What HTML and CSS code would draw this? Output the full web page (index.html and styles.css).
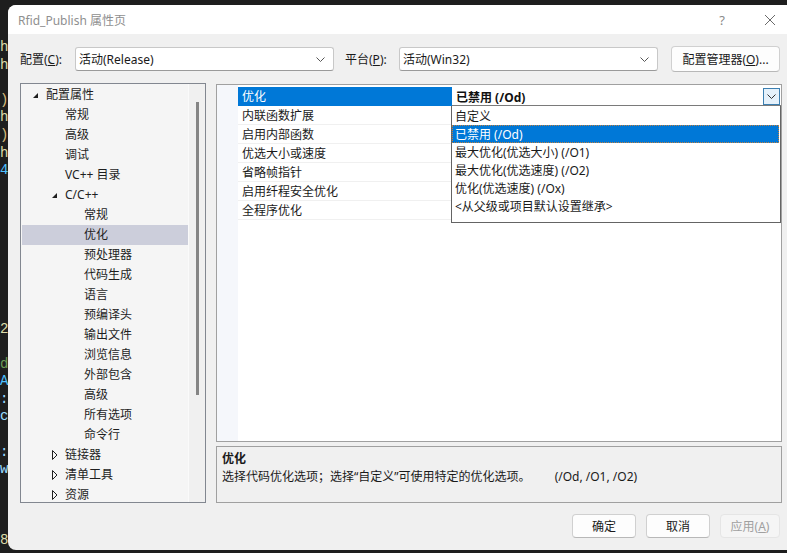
FILE: index.html
```html
<!DOCTYPE html>
<html lang="zh-CN">
<head>
<meta charset="utf-8">
<title>Rfid_Publish 属性页</title>
<link rel="stylesheet" href="styles.css">
</head>
<body>
<div class="desk">
  <div class="code">
    <div class="cl y">h</div>
    <div class="cl y">h</div>
    <div class="cl"></div>
    <div class="cl w">)</div>
    <div class="cl y">h</div>
    <div class="cl w">)</div>
    <div class="cl y">h</div>
    <div class="cl b">4</div>
    <div class="cl"></div><div class="cl"></div><div class="cl"></div><div class="cl"></div>
    <div class="cl"></div><div class="cl"></div><div class="cl"></div><div class="cl"></div>
    <div class="cl y">2</div>
    <div class="cl"></div>
    <div class="cl g">d</div>
    <div class="cl b">A</div>
    <div class="cl lb">:</div>
    <div class="cl lb">c</div>
    <div class="cl"></div>
    <div class="cl lb">:</div>
    <div class="cl lb">w</div>
    <div class="cl"></div><div class="cl"></div><div class="cl"></div>
    <div class="cl y">8</div>
  </div>
  <div class="win">
    <div class="titlebar">
      <span class="title">Rfid_Publish 属性页</span>
      <span class="help">?</span>
      <span class="close"><svg width="12" height="12" viewBox="0 0 12 12"><path d="M1 1 L11 11 M11 1 L1 11" stroke="#6a6a6a" stroke-width="1" fill="none"/></svg></span>
    </div>
    <div class="content">
      <div class="toprow">
        <span class="lbl lbl1">配置(<u>C</u>):</span>
        <div class="combo"><span>活动(Release)</span><svg class="chev" width="9" height="5" viewBox="0 0 9 5"><path d="M0.5 0.5 L4.5 4.5 L8.5 0.5" stroke="#555" fill="none"/></svg></div>
        <span class="lbl lbl2">平台(<u>P</u>):</span>
        <div class="combo"><span>活动(Win32)</span><svg class="chev" width="9" height="5" viewBox="0 0 9 5"><path d="M0.5 0.5 L4.5 4.5 L8.5 0.5" stroke="#555" fill="none"/></svg></div>
        <button class="btn mgr">配置管理器(<u>O</u>)...</button>
      </div>
      <div class="main">
        <div class="tree">
          <div class="tree-list">
            <div class="node l0"><span class="exp"></span>配置属性</div>
            <div class="node l1">常规</div>
            <div class="node l1">高级</div>
            <div class="node l1">调试</div>
            <div class="node l1">VC++ 目录</div>
            <div class="node l1t"><span class="exp"></span>C/C++</div>
            <div class="node l2">常规</div>
            <div class="node l2 sel">优化</div>
            <div class="node l2">预处理器</div>
            <div class="node l2">代码生成</div>
            <div class="node l2">语言</div>
            <div class="node l2">预编译头</div>
            <div class="node l2">输出文件</div>
            <div class="node l2">浏览信息</div>
            <div class="node l2">外部包含</div>
            <div class="node l2">高级</div>
            <div class="node l2">所有选项</div>
            <div class="node l2">命令行</div>
            <div class="node l1t"><svg class="col" width="6" height="10" viewBox="0 0 6 10"><path d="M0.5 0.5 L5 5 L0.5 9.5 Z" stroke="#1e1e1e" fill="none"/></svg>链接器</div>
            <div class="node l1t"><svg class="col" width="6" height="10" viewBox="0 0 6 10"><path d="M0.5 0.5 L5 5 L0.5 9.5 Z" stroke="#1e1e1e" fill="none"/></svg>清单工具</div>
            <div class="node l1t"><svg class="col" width="6" height="10" viewBox="0 0 6 10"><path d="M0.5 0.5 L5 5 L0.5 9.5 Z" stroke="#1e1e1e" fill="none"/></svg>资源</div>
          </div>
          <div class="scroll"><div class="thumb"></div></div>
        </div>
        <div class="rightcol">
          <div class="grid">
            <div class="gutter"></div>
            <div class="rows">
              <div class="prow first">
                <div class="pname selname">优化</div>
                <div class="pval edit"><b>已禁用 (/Od)</b><span class="ddbtn"><svg width="9" height="5" viewBox="0 0 9 5"><path d="M0.5 0.5 L4.5 4.5 L8.5 0.5" stroke="#333" fill="none"/></svg></span></div>
              </div>
              <div class="prow"><div class="pname">内联函数扩展</div><div class="pval"></div></div>
              <div class="prow"><div class="pname">启用内部函数</div><div class="pval"></div></div>
              <div class="prow"><div class="pname">优选大小或速度</div><div class="pval"></div></div>
              <div class="prow"><div class="pname">省略帧指针</div><div class="pval"></div></div>
              <div class="prow"><div class="pname">启用纤程安全优化</div><div class="pval"></div></div>
              <div class="prow"><div class="pname">全程序优化</div><div class="pval"></div></div>
            </div>
            <div class="dropdown">
              <div class="opt">自定义</div>
              <div class="opt cur">已禁用 (/Od)</div>
              <div class="opt">最大优化(优选大小) (/O1)</div>
              <div class="opt">最大优化(优选速度) (/O2)</div>
              <div class="opt">优化(优选速度) (/Ox)</div>
              <div class="opt">&lt;从父级或项目默认设置继承&gt;</div>
            </div>
          </div>
          <div class="desc">
            <div class="dtitle">优化</div>
            <div class="dtext">选择代码优化选项；选择“自定义”可使用特定的优化选项。<span class="dflags">(/Od, /O1, /O2)</span></div>
          </div>
        </div>
      </div>
      <div class="buttons">
        <button class="btn act">确定</button>
        <button class="btn act">取消</button>
        <button class="btn act dis">应用(<u>A</u>)</button>
      </div>
    </div>
  </div>
</div>
</body>
</html>
```

FILE: styles.css
```css
* { box-sizing: border-box; }
html, body { margin: 0; padding: 0; }
body {
  background: #1e1e1e;
  width: 787px;
  height: 553px;
  overflow: hidden;
  font-family: "Noto Sans", "Noto Sans CJK SC", sans-serif;
  font-size: 12px;
  color: #1a1a1a;
}
.desk { display: flex; height: 553px; }
.code {
  width: 8px;
  flex: none;
  overflow: hidden;
  padding-top: 39px;
  font-family: "Liberation Mono", monospace;
  font-size: 14px;
  line-height: 17.6px;
}
.cl { height: 17.6px; white-space: pre; }
.y { color: #dcdcaa; }
.w { color: #d7ba7d; }
.b { color: #4fc1ff; }
.lb { color: #9cdcfe; }
.g { color: #6a9955; }

.win {
  flex: 1;
  margin-top: 5px;
  height: 545px;
  border-radius: 8px 0 0 8px;
  background: #f0f0f0;
  overflow: hidden;
  display: flex;
  flex-direction: column;
}
.titlebar {
  height: 29px;
  background: #ffffff;
  display: flex;
  align-items: center;
  padding-left: 10px;
  flex: none;
}
.title { color: #8f8f8f; font-size: 12px; flex: 1; }
.help { color: #8a8a8a; font-size: 13px; width: 14px; text-align: center; margin-right: 35px; }
.close { display: flex; align-items: center; margin-right: 11px; }

.content { flex: 1; display: flex; flex-direction: column; padding-top: 12px; }
.toprow { display: flex; align-items: center; padding-left: 12px; height: 26px; }
.lbl { color: #1a1a1a; }
.lbl1 { width: 55px; }
.lbl2 { width: 54px; margin-left: 11px; }
.combo {
  width: 259px;
  height: 24px;
  background: #fff;
  border: 1px solid #c8c8c8;
  border-bottom-color: #9a9a9a;
  border-radius: 3px;
  display: flex;
  align-items: center;
  justify-content: space-between;
  padding: 0 8px 0 3px;
}
.btn {
  font-family: "Noto Sans", "Noto Sans CJK SC", sans-serif;
  font-size: 12px;
  color: #1a1a1a;
  background: #fdfdfd;
  border: 1px solid #d0d0d0;
  border-bottom-color: #b8b8b8;
  border-radius: 4px;
  padding: 0;
}
.mgr { width: 109px; height: 26px; margin-left: 13px; }

.main { display: flex; margin-top: 11px; padding-left: 12px; height: 420px; }
.tree {
  width: 186px;
  height: 420px;
  border: 1px solid #828790;
  background: #f5f5f5;
  display: flex;
}
.tree-list { flex: 1; padding-left: 1px; padding-top: 1px; }
.node { height: 20px; line-height: 20px; display: flex; align-items: center; color: #1e1e1e; white-space: nowrap; }
.l0 { padding-left: 11px; }
.l1 { padding-left: 43px; }
.l1t { padding-left: 30px; }
.l2 { padding-left: 62px; }
.sel { background: #cccedb; }
.exp {
  width: 0; height: 0;
  border-left: 5px solid transparent;
  border-bottom: 5px solid #1e1e1e;
  margin-right: 8px;
  margin-top: 1px;
}
.col { margin-right: 7px; flex: none; }
.scroll { width: 17px; background: #f0f0f0; border-left: 1px solid #fafafa; display: flex; justify-content: center; padding-top: 18px; }
.thumb { width: 3px; height: 293px; background: #858585; }

.rightcol { margin-left: 10px; width: 566px; display: flex; flex-direction: column; }
.grid {
  position: relative;
  height: 358px;
  margin-top: 1px;
  border: 1px solid #a0a0a0;
  background: #ffffff;
  display: flex;
}
.gutter { width: 21px; background: #f5f7fb; }
.rows { flex: 1; padding-top: 2px; }
.prow { display: flex; height: 19px; border-bottom: 1px solid #f0f0f0; }
.pname { width: 214px; padding-left: 4px; padding-top: 2px; line-height: 16px; color: #1a1a1a; }
.pval { flex: 1; }
.selname { background: #0078d7; color: #fff; }
.first { border-bottom: none; }
.edit { display: flex; align-items: center; justify-content: space-between; padding-left: 4px; padding-right: 1px; height: 19px; border-bottom: 1px solid #7a7a7a; }
.edit b { font-weight: bold; color: #111; padding-top: 2px; }
.ddbtn { width: 17px; height: 17px; background: #e5f1fb; border: 1px solid #3c7fb1; display: flex; align-items: center; justify-content: center; }
.dropdown {
  position: absolute;
  left: 234px;
  top: 21px;
  width: 330px;
  height: 117px;
  background: #ffffff;
  border: 1px solid #646464;
  border-top: none;
  padding-top: 1px;
}
.opt { height: 18px; line-height: 16px; padding-top: 2px; padding-left: 3px; color: #1a1a1a; white-space: nowrap; }
.cur { background: #0078d7; color: #fff; outline: 1px dotted #c08040; outline-offset: -1px; margin-right: 1px; }

.desc {
  margin-top: 4px;
  height: 57px;
  border: 1px solid #a0a0a0;
  background: #f0f0f0;
  padding: 3px 5px;
  line-height: 18px;
}
.dtitle { font-weight: bold; }
.dflags { margin-left: 24px; }

.buttons { display: flex; justify-content: flex-end; gap: 10px; padding-right: 7px; margin-top: 11px; }
.act { width: 64px; height: 24px; }
.act.dis { width: 60px; color: #a0a0a0; background: #f5f5f5; border-color: #e5e5e5; }
```
